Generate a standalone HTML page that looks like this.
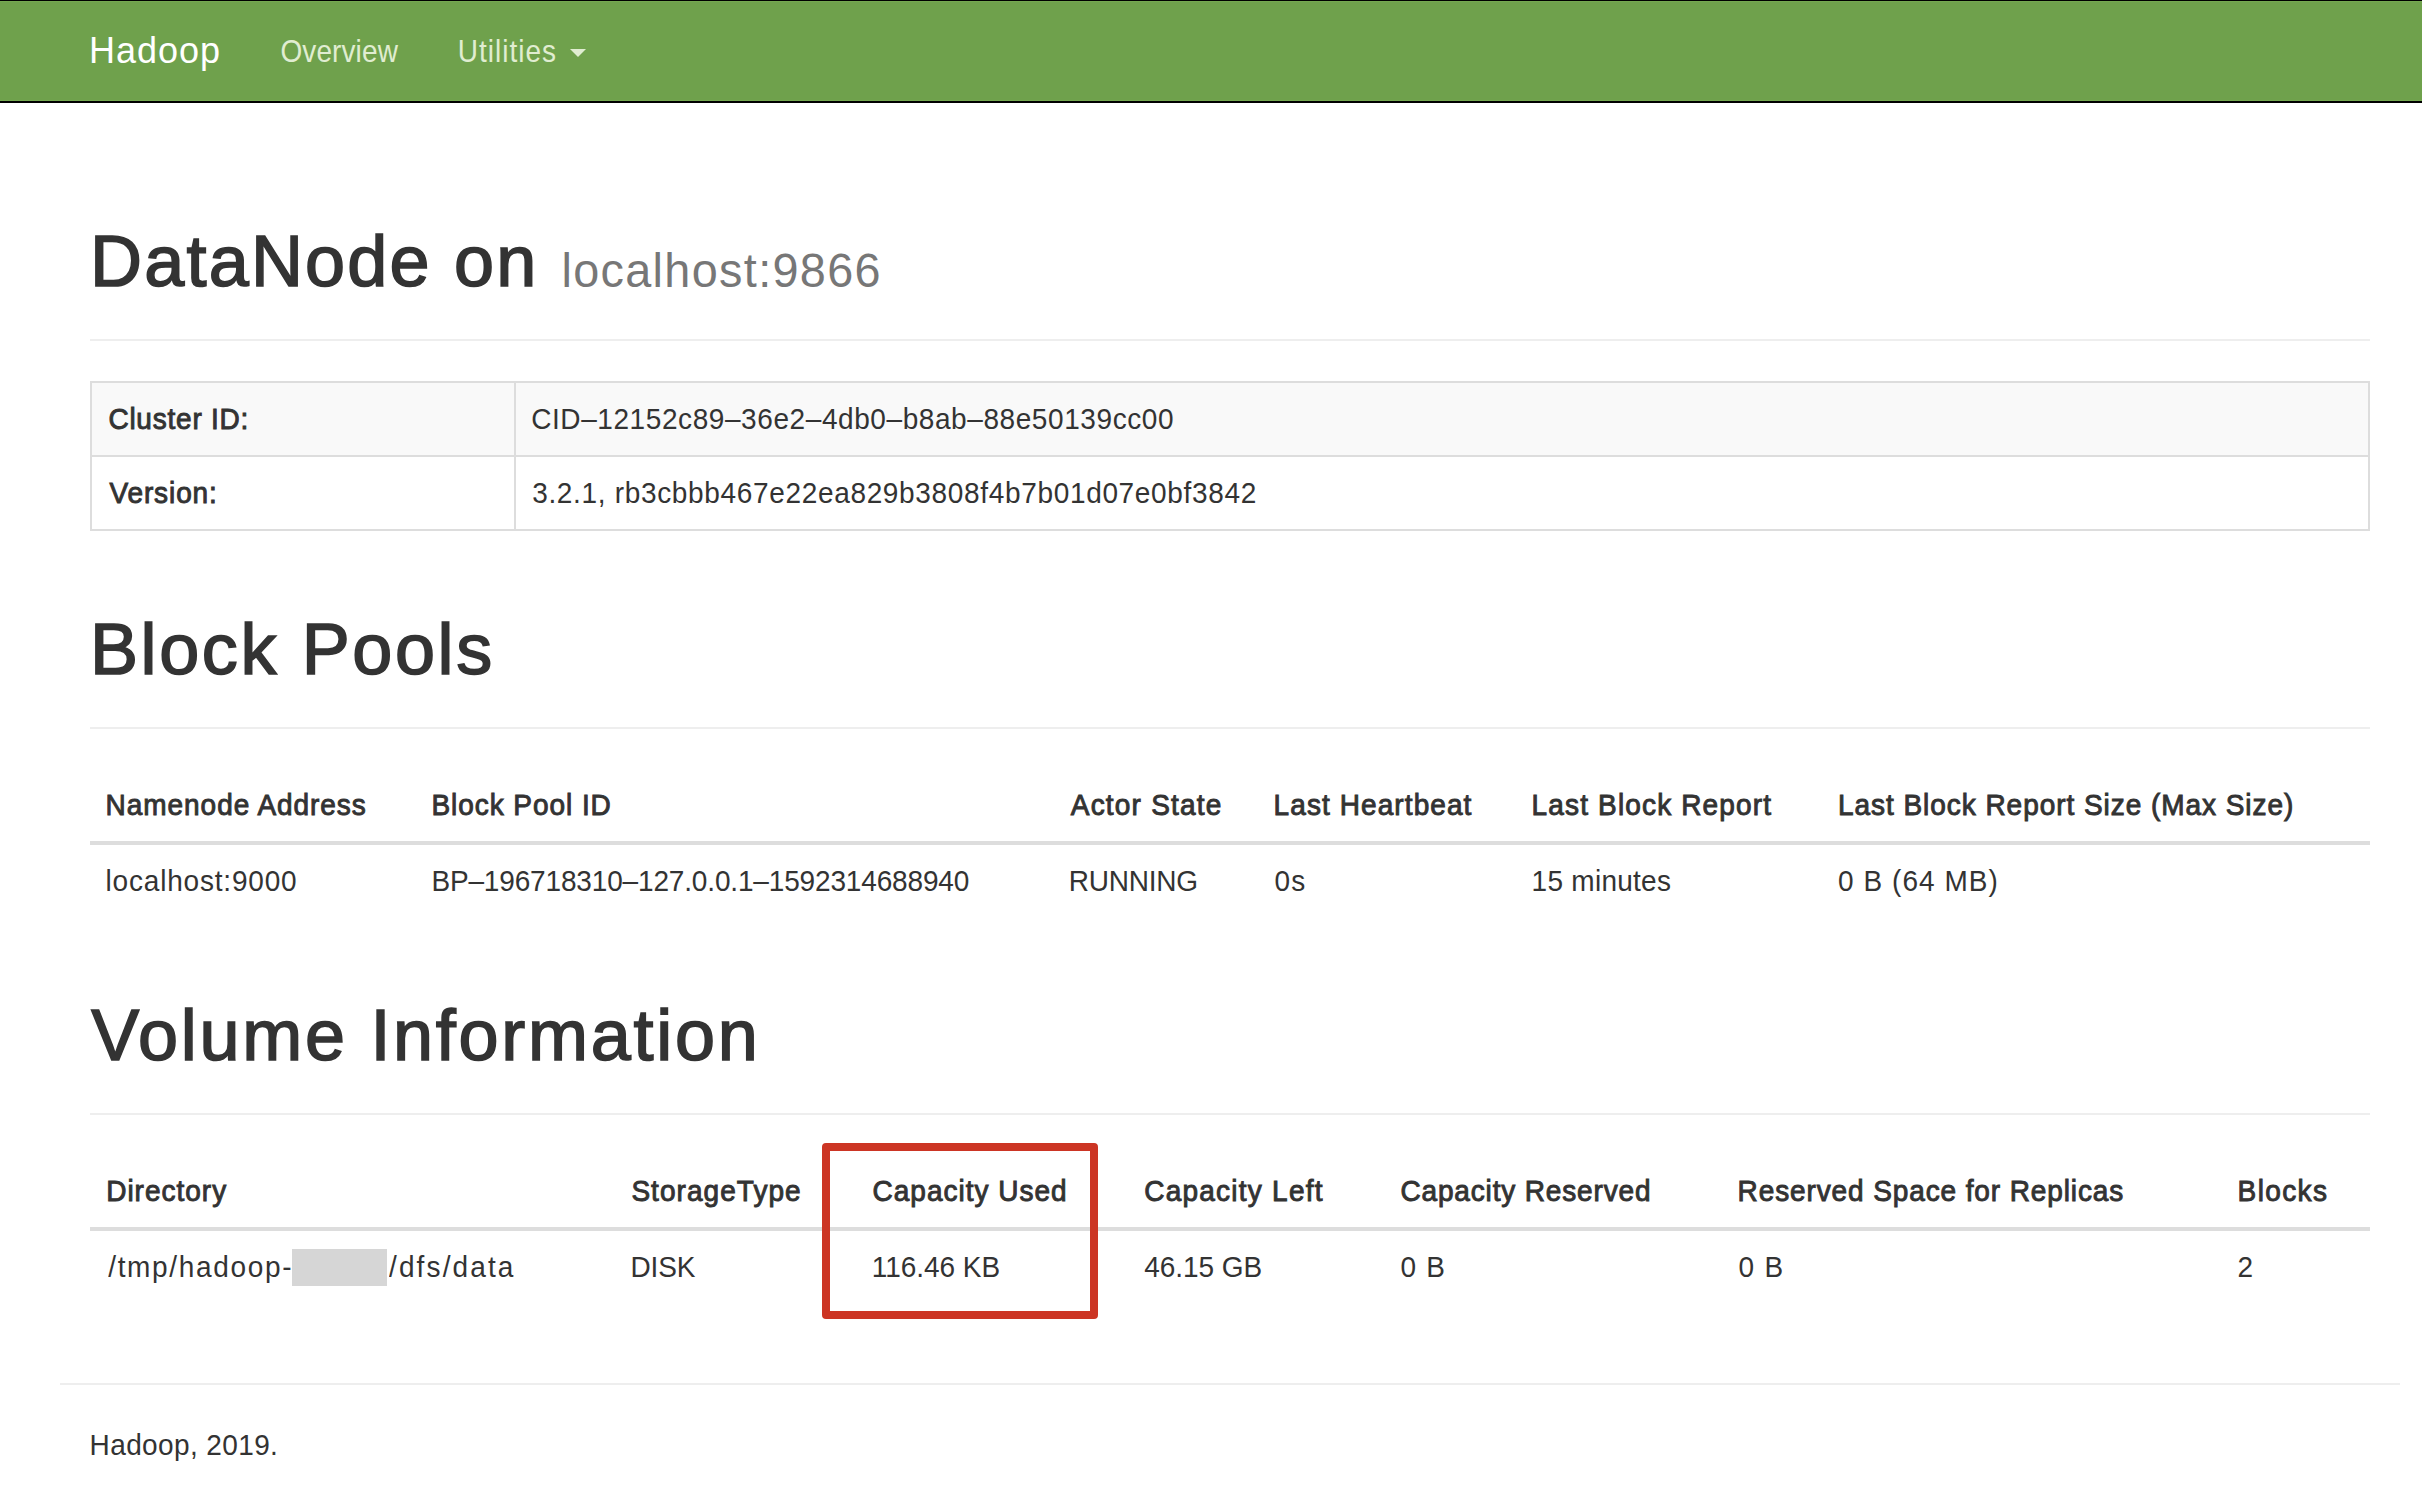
<!DOCTYPE html>
<html><head><meta charset="utf-8"><title>DataNode Information</title>
<style>
html,body{margin:0;padding:0}
body{width:2422px;height:1498px;position:relative;overflow:hidden;background:#fff;font-family:"Liberation Sans",sans-serif;color:#333}
.t{position:absolute;white-space:nowrap;line-height:1}
.b{display:inline-block;width:0;height:0;vertical-align:baseline}
.r{position:absolute}
</style></head><body>
<div class="r" style="left:0;top:0;width:2422px;height:103px;background:#6fa14c"></div>
<div class="r" style="left:0;top:0;width:2422px;height:1px;background:#000"></div>
<div class="r" style="left:0;top:1px;width:2422px;height:1px;background:#75a851"></div>
<div class="r" style="left:0;top:100px;width:2422px;height:1px;background:#75a851"></div>
<div class="r" style="left:0;top:101px;width:2422px;height:2px;background:#000"></div>
<div class="r" style="left:570px;top:49px;width:0;height:0;border-top:8px solid #e0edd1;border-left:8px solid transparent;border-right:8px solid transparent"></div>
<!-- header rules -->
<div class="r" style="left:90px;top:339px;width:2280px;height:2px;background:#eeeeee"></div>
<div class="r" style="left:90px;top:727px;width:2280px;height:2px;background:#eeeeee"></div>
<div class="r" style="left:90px;top:1113px;width:2280px;height:2px;background:#eeeeee"></div>
<!-- table1 -->
<div class="r" style="left:90px;top:381px;width:2276px;height:146px;border:2px solid #dddddd"></div>
<div class="r" style="left:92px;top:383px;width:2276px;height:72px;background:#f9f9f9"></div>
<div class="r" style="left:92px;top:455px;width:2276px;height:2px;background:#dddddd"></div>
<div class="r" style="left:514px;top:383px;width:2px;height:146px;background:#dddddd"></div>
<!-- table2 -->
<div class="r" style="left:90px;top:841px;width:2280px;height:4px;background:#dddddd"></div>
<!-- table3 -->
<div class="r" style="left:90px;top:1227px;width:2280px;height:4px;background:#dddddd"></div>
<div class="r" style="left:292px;top:1249px;width:95px;height:37px;background:#d6d6d6"></div>
<div class="r" style="left:822px;top:1143px;width:260px;height:160px;border:8px solid #cc3524;border-radius:4px"></div>
<!-- footer -->
<div class="r" style="left:60px;top:1383px;width:2340px;height:2px;background:#eeeeee"></div>
<div id="brand" class="t" style="left:89.00px;top:32.91px;font-size:36px;font-weight:400;color:#ffffff;letter-spacing:1.000px">Hadoop<i class="b"></i></div>
<div id="nav1" class="t" style="left:280.40px;top:38.58px;font-size:28px;font-weight:400;color:#e0edd1;letter-spacing:0.110px;transform:scaleY(1.100);transform-origin:0 23.70px">Overview<i class="b"></i></div>
<div id="nav2" class="t" style="left:457.80px;top:38.58px;font-size:28px;font-weight:400;color:#e0edd1;letter-spacing:1.000px;transform:scaleY(1.100);transform-origin:0 23.70px">Utilities<i class="b"></i></div>
<div id="h1a" class="t" style="left:90.00px;top:225.21px;font-size:72px;font-weight:400;color:#333333;letter-spacing:2.200px;-webkit-text-stroke:1.6px #333333;transform:scaleY(1.010);transform-origin:0 60.95px">DataNode on<i class="b"></i></div>
<div id="h1b" class="t" style="left:561.40px;top:247.81px;font-size:46.8px;font-weight:400;color:#777777;letter-spacing:1.340px;transform:scaleY(1.010);transform-origin:0 39.62px">localhost:9866<i class="b"></i></div>
<div id="c1" class="t" style="left:108.40px;top:405.65px;font-size:28px;font-weight:400;color:#333333;letter-spacing:0.770px;-webkit-text-stroke:0.9px #333333;transform:scaleY(1.053);transform-origin:0 23.70px">Cluster ID:<i class="b"></i></div>
<div id="c2" class="t" style="left:109.40px;top:479.65px;font-size:28px;font-weight:400;color:#333333;letter-spacing:0.901px;-webkit-text-stroke:0.9px #333333;transform:scaleY(1.053);transform-origin:0 23.70px">Version:<i class="b"></i></div>
<div id="v1" class="t" style="left:531.20px;top:405.96px;font-size:28px;font-weight:400;color:#333333;letter-spacing:0.581px;transform:scaleY(1.064);transform-origin:0 23.70px">CID–12152c89–36e2–4db0–b8ab–88e50139cc00<i class="b"></i></div>
<div id="v2" class="t" style="left:532.20px;top:479.95px;font-size:28px;font-weight:400;color:#333333;letter-spacing:0.664px;transform:scaleY(1.064);transform-origin:0 23.70px">3.2.1, rb3cbbb467e22ea829b3808f4b7b01d07e0bf3842<i class="b"></i></div>
<div id="h2" class="t" style="left:90.00px;top:613.01px;font-size:72px;font-weight:400;color:#333333;letter-spacing:2.600px;-webkit-text-stroke:1.6px #333333;transform:scaleY(1.010);transform-origin:0 60.95px">Block Pools<i class="b"></i></div>
<div id="bh1" class="t" style="left:105.60px;top:791.65px;font-size:28px;font-weight:400;color:#333333;letter-spacing:0.953px;-webkit-text-stroke:0.9px #333333;transform:scaleY(1.053);transform-origin:0 23.70px">Namenode Address<i class="b"></i></div>
<div id="bh2" class="t" style="left:431.40px;top:791.65px;font-size:28px;font-weight:400;color:#333333;letter-spacing:0.948px;-webkit-text-stroke:0.9px #333333;transform:scaleY(1.053);transform-origin:0 23.70px">Block Pool ID<i class="b"></i></div>
<div id="bh3" class="t" style="left:1070.80px;top:791.65px;font-size:28px;font-weight:400;color:#333333;letter-spacing:1.200px;-webkit-text-stroke:0.9px #333333;transform:scaleY(1.053);transform-origin:0 23.70px">Actor State<i class="b"></i></div>
<div id="bh4" class="t" style="left:1273.60px;top:791.65px;font-size:28px;font-weight:400;color:#333333;letter-spacing:1.087px;-webkit-text-stroke:0.9px #333333;transform:scaleY(1.053);transform-origin:0 23.70px">Last Heartbeat<i class="b"></i></div>
<div id="bh5" class="t" style="left:1531.60px;top:791.65px;font-size:28px;font-weight:400;color:#333333;letter-spacing:1.152px;-webkit-text-stroke:0.9px #333333;transform:scaleY(1.053);transform-origin:0 23.70px">Last Block Report<i class="b"></i></div>
<div id="bh6" class="t" style="left:1838.00px;top:791.65px;font-size:28px;font-weight:400;color:#333333;letter-spacing:0.954px;-webkit-text-stroke:0.9px #333333;transform:scaleY(1.053);transform-origin:0 23.70px">Last Block Report Size (Max Size)<i class="b"></i></div>
<div id="bd1" class="t" style="left:105.60px;top:867.95px;font-size:28px;font-weight:400;color:#333333;letter-spacing:0.802px;transform:scaleY(1.064);transform-origin:0 23.70px">localhost:9000<i class="b"></i></div>
<div id="bd2" class="t" style="left:431.40px;top:867.95px;font-size:28px;font-weight:400;color:#333333;letter-spacing:-0.157px;transform:scaleY(1.064);transform-origin:0 23.70px">BP–196718310–127.0.0.1–1592314688940<i class="b"></i></div>
<div id="bd3" class="t" style="left:1068.80px;top:867.95px;font-size:28px;font-weight:400;color:#333333;letter-spacing:-0.235px;transform:scaleY(1.064);transform-origin:0 23.70px">RUNNING<i class="b"></i></div>
<div id="bd4" class="t" style="left:1274.60px;top:867.95px;font-size:28px;font-weight:400;color:#333333;letter-spacing:1.200px;transform:scaleY(1.064);transform-origin:0 23.70px">0s<i class="b"></i></div>
<div id="bd5" class="t" style="left:1531.60px;top:867.95px;font-size:28px;font-weight:400;color:#333333;letter-spacing:0.263px;transform:scaleY(1.064);transform-origin:0 23.70px">15 minutes<i class="b"></i></div>
<div id="bd6" class="t" style="left:1838.00px;top:867.95px;font-size:28px;font-weight:400;color:#333333;letter-spacing:1.050px;transform:scaleY(1.064);transform-origin:0 23.70px">0 B (64 MB)<i class="b"></i></div>
<div id="h3" class="t" style="left:91.20px;top:999.01px;font-size:72px;font-weight:400;color:#333333;letter-spacing:2.720px;-webkit-text-stroke:1.6px #333333;transform:scaleY(1.010);transform-origin:0 60.95px">Volume Information<i class="b"></i></div>
<div id="vh1" class="t" style="left:106.20px;top:1177.65px;font-size:28px;font-weight:400;color:#333333;letter-spacing:0.993px;-webkit-text-stroke:0.9px #333333;transform:scaleY(1.053);transform-origin:0 23.70px">Directory<i class="b"></i></div>
<div id="vh2" class="t" style="left:631.40px;top:1177.65px;font-size:28px;font-weight:400;color:#333333;letter-spacing:1.050px;-webkit-text-stroke:0.9px #333333;transform:scaleY(1.053);transform-origin:0 23.70px">StorageType<i class="b"></i></div>
<div id="vh3" class="t" style="left:872.60px;top:1177.65px;font-size:28px;font-weight:400;color:#333333;letter-spacing:0.993px;-webkit-text-stroke:0.9px #333333;transform:scaleY(1.053);transform-origin:0 23.70px">Capacity Used<i class="b"></i></div>
<div id="vh4" class="t" style="left:1144.20px;top:1177.65px;font-size:28px;font-weight:400;color:#333333;letter-spacing:1.242px;-webkit-text-stroke:0.9px #333333;transform:scaleY(1.053);transform-origin:0 23.70px">Capacity Left<i class="b"></i></div>
<div id="vh5" class="t" style="left:1400.40px;top:1177.65px;font-size:28px;font-weight:400;color:#333333;letter-spacing:0.848px;-webkit-text-stroke:0.9px #333333;transform:scaleY(1.053);transform-origin:0 23.70px">Capacity Reserved<i class="b"></i></div>
<div id="vh6" class="t" style="left:1737.60px;top:1177.65px;font-size:28px;font-weight:400;color:#333333;letter-spacing:0.888px;-webkit-text-stroke:0.9px #333333;transform:scaleY(1.053);transform-origin:0 23.70px">Reserved Space for Replicas<i class="b"></i></div>
<div id="vh7" class="t" style="left:2237.60px;top:1177.65px;font-size:28px;font-weight:400;color:#333333;letter-spacing:1.380px;-webkit-text-stroke:0.9px #333333;transform:scaleY(1.053);transform-origin:0 23.70px">Blocks<i class="b"></i></div>
<div id="vd1a" class="t" style="left:108.20px;top:1254.05px;font-size:28px;font-weight:400;color:#333333;letter-spacing:1.669px;transform:scaleY(1.064);transform-origin:0 23.70px">/tmp/hadoop-<i class="b"></i></div>
<div id="vd1b" class="t" style="left:389.00px;top:1254.05px;font-size:28px;font-weight:400;color:#333333;letter-spacing:2.125px;transform:scaleY(1.064);transform-origin:0 23.70px">/dfs/data<i class="b"></i></div>
<div id="vd2" class="t" style="left:630.40px;top:1254.05px;font-size:28px;font-weight:400;color:#333333;letter-spacing:-0.069px;transform:scaleY(1.064);transform-origin:0 23.70px">DISK<i class="b"></i></div>
<div id="vd3" class="t" style="left:871.80px;top:1254.05px;font-size:28px;font-weight:400;color:#333333;letter-spacing:-0.050px;transform:scaleY(1.064);transform-origin:0 23.70px">116.46 KB<i class="b"></i></div>
<div id="vd4" class="t" style="left:1144.20px;top:1254.05px;font-size:28px;font-weight:400;color:#333333;letter-spacing:-0.033px;transform:scaleY(1.064);transform-origin:0 23.70px">46.15 GB<i class="b"></i></div>
<div id="vd5" class="t" style="left:1400.40px;top:1254.05px;font-size:28px;font-weight:400;color:#333333;letter-spacing:1.300px;transform:scaleY(1.064);transform-origin:0 23.70px">0 B<i class="b"></i></div>
<div id="vd6" class="t" style="left:1738.60px;top:1254.05px;font-size:28px;font-weight:400;color:#333333;letter-spacing:1.300px;transform:scaleY(1.064);transform-origin:0 23.70px">0 B<i class="b"></i></div>
<div id="vd7" class="t" style="left:2237.60px;top:1254.05px;font-size:28px;font-weight:400;color:#333333;letter-spacing:0.000px;transform:scaleY(1.064);transform-origin:0 23.70px">2<i class="b"></i></div>
<div id="ft" class="t" style="left:89.60px;top:1431.96px;font-size:28px;font-weight:400;color:#333333;letter-spacing:0.383px;transform:scaleY(1.070);transform-origin:0 23.70px">Hadoop, 2019.<i class="b"></i></div>
</body></html>
